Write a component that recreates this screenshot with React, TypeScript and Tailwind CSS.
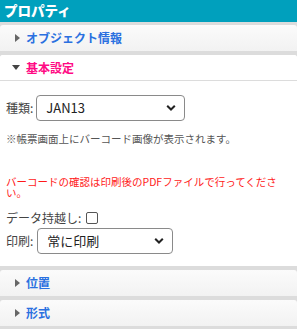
import React from "react";

const font = { fontFamily: '"Noto Sans CJK JP", "Noto Sans", sans-serif' };

function Caret({ open }: { open?: boolean }) {
  return open ? (
    <span className="inline-block w-0 h-0 border-l-[4px] border-r-[4px] border-t-[5px] border-l-transparent border-r-transparent border-t-[#444]" />
  ) : (
    <span className="inline-block w-0 h-0 border-t-[4px] border-b-[4px] border-l-[5px] border-t-transparent border-b-transparent border-l-[#666]" />
  );
}

function SectionHead({ title, open }: { title: string; open?: boolean }) {
  return (
    <div
      className={
        open
          ? "flex items-center h-[26px] bg-white border-b border-[#dcdcdc] rounded-t-[3px] pl-[12px]"
          : "flex items-center h-[26px] bg-gradient-to-b from-[#fbfbfb] to-[#f2f2f2] rounded-t-[3px] pl-[13px]"
      }
    >
      <span className="w-[8px] flex justify-center">
        <Caret open={open} />
      </span>
      <span
        className={
          open
            ? "ml-[6px] text-[12px] font-bold text-[#ff0a84]"
            : "ml-[5px] text-[12px] font-bold text-[#2a70e0]"
        }
      >
        {title}
      </span>
    </div>
  );
}

function Chevron() {
  return (
    <svg width="10" height="7" viewBox="0 0 10 7" className="absolute right-[8px] top-1/2 -translate-y-1/2">
      <path d="M1.2 1.2 L5 5 L8.8 1.2" fill="none" stroke="#222" strokeWidth="2" />
    </svg>
  );
}

function Select({ value, w }: { value: string; w: string }) {
  return (
    <div className={`relative h-[26px] border border-[#8a8a8a] rounded-[4px] bg-white flex items-center pl-[9px] ${w}`}>
      <span className="text-[13px] text-[#222]">{value}</span>
      <Chevron />
    </div>
  );
}

export default function App() {
  return (
    <div className="w-[297px] h-[329px] bg-[#dcdcdc] overflow-hidden" style={font}>
      <div className="h-[22px] bg-[#00a0bd] flex items-center pl-[4px]">
        <span className="text-white font-black text-[13.5px] leading-none">プロパティ</span>
      </div>
      <div className="mt-[3px]">
        <SectionHead title="オブジェクト情報" />
      </div>
      <div className="mt-[4px] bg-white rounded-t-[3px]">
        <SectionHead title="基本設定" open />
        <div className="h-[185px] px-[6px] pt-[14px] text-[#444]">
          <div className="flex items-center gap-[3px]">
            <span className="text-[12px]">種類:</span>
            <Select value="JAN13" w="w-[149px]" />
          </div>
          <div className="mt-[11px] text-[10.5px] leading-[14px] text-[#555]">
            ※帳票画面上にバーコード画像が表示されます。
          </div>
          <div className="mt-[30px] text-[10.5px] leading-[11px] text-[#ff1a1a]">
            バーコードの確認は印刷後のPDFファイルで行ってください。
          </div>
          <div className="mt-[11px] flex items-center gap-[5px]">
            <span className="text-[12px]">データ持越し:</span>
            <span className="w-[12px] h-[12px] border border-[#555] rounded-[2px] bg-white" />
          </div>
          <div className="mt-[1px] flex items-center gap-[4px]">
            <span className="text-[12px]">印刷:</span>
            <Select value="常に印刷" w="w-[136px]" />
          </div>
        </div>
      </div>
      <div className="mt-[4px]">
        <SectionHead title="位置" />
      </div>
      <div className="mt-[4px]">
        <SectionHead title="形式" />
      </div>
    </div>
  );
}
